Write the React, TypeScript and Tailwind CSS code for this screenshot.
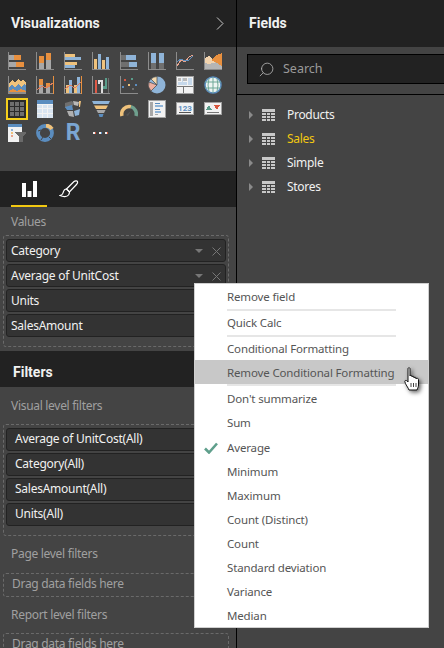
import React from 'react';
import { Search } from 'lucide-react';

const G = '#a8a8a8';
const D = '#6f6f6f';
const O = '#e8903f';
const B = '#8fb4d8';
const T = '#efc27c';
const A = '#8c8c8c';
const W = '#f2f2f2';
const N = '#5b8dbf';

type Box = [number, number, number, number, string];

// a small chart icon out of plain bars
function Bars({ boxes, children }: { boxes: Box[]; children?: React.ReactNode }) {
  return (
    <svg width="18" height="18" viewBox="0 0 18 18" shapeRendering="crispEdges">
      {boxes.map(([x, y, w, h, c], i) => (
        <rect key={i} x={x} y={y} width={w} height={h} fill={c} />
      ))}
      {children}
    </svg>
  );
}

const axisL: Box[] = [[0, 0, 1, 18, A], [0, 17, 18, 1, A]];
const frame = (bg: string): Box[] => [[0, 0, 18, 18, '#a0a0a0'], [1, 1, 16, 16, bg]];

const icons: React.ReactNode[] = [
  <Bars boxes={[...axisL, [1, 3, 5, 5, G], [6, 3, 7, 5, O], [1, 10, 7, 5, G], [8, 10, 8, 5, O]]} />,
  <Bars boxes={[...axisL, [3, 11, 5, 6, G], [3, 4, 5, 7, O], [10, 8, 5, 9, G], [10, 1, 5, 7, O]]} />,
  <Bars boxes={[...axisL, [1, 2, 10, 3, T], [1, 5, 16, 3, B], [1, 10, 12, 3, T], [1, 13, 10, 3, B]]} />,
  <Bars boxes={[...axisL, [2, 7, 3, 10, T], [6, 2, 3, 15, B], [10, 8, 3, 9, T], [14, 5, 3, 12, B]]} />,
  <Bars boxes={[...axisL, [1, 3, 5, 5, D], [6, 3, 10, 5, B], [1, 10, 8, 5, D], [9, 10, 8, 5, B]]} />,
  <Bars boxes={[...axisL, [3, 11, 5, 6, D], [3, 1, 5, 10, B], [11, 11, 5, 6, D], [11, 1, 5, 10, B]]} />,
  <Bars boxes={axisL}>
    <path d="M1 14L5 8L9 10L13 5L17 3" fill="none" stroke="#e8a58f" strokeWidth="1" />
    <path d="M1 10L5 7L9 9L13 8L17 4" fill="none" stroke="#5f8fbf" strokeWidth="1" />
  </Bars>,
  <Bars boxes={[[0, 0, 1, 18, A], [0, 17, 18, 1, A]]}>
    <path d="M1 17V11L5 12L11 10L18 14V17Z" fill="#b5b5b5" />
    <path d="M1 11V6L5 4L9 8L13 10L5 12Z" fill="#f2d3ae" />
    <path d="M7 8L12 3L18 1V14L11 10Z" fill={O} />
  </Bars>,
  <Bars boxes={[[0, 16, 18, 2, A], [0, 0, 1, 18, A]]}>
    <path d="M1 16V8L4 4L7 7L10 3L13 6L15 3L18 7V16Z" fill={T} />
    <path d="M1 11L4 9L7 12L10 8L13 11L16 8L18 10V15H1Z" fill={N} />
    <path d="M1 15L5 13L9 15L13 13L18 15V16H1Z" fill={O} />
  </Bars>,
  <Bars boxes={[...axisL, [3, 9, 4, 8, G], [10, 11, 4, 6, G], [3, 3, 4, 6, O], [10, 7, 4, 4, O], [17, 0, 1, 18, O]]}>
    <path d="M1 14L6 10L10 12L17 7" fill="none" stroke="#e07f5f" strokeWidth="1" />
  </Bars>,
  <Bars boxes={[...axisL, [2, 9, 3, 8, T], [5, 4, 3, 13, B], [10, 9, 3, 8, T], [13, 1, 3, 16, B], [17, 0, 1, 18, O]]}>
    <path d="M1 13L6 9L11 12L17 6" fill="none" stroke="#e07f5f" strokeWidth="1" />
  </Bars>,
  <Bars boxes={[...axisL, [3, 4, 2, 13, '#e05a47'], [6, 4, 2, 4, '#dddddd'], [6, 4, 4, 2, '#dddddd'], [9, 4, 2, 13, '#dddddd'], [11, 10, 3, 3, '#5a9c8a'], [13, 2, 2, 11, '#5a9c8a'], [16, 2, 1, 15, D]]} />,
  <Bars boxes={axisL}>
    <circle cx="5" cy="4" r="1.5" fill="#d9583f" />
    <circle cx="12" cy="3" r="1.5" fill="#5a9c8a" />
    <circle cx="9" cy="9" r="1.5" fill={T} />
    <circle cx="3" cy="11" r="1.5" fill={N} />
    <circle cx="16" cy="9" r="1.5" fill={N} />
    <circle cx="13" cy="13" r="1.5" fill={D} />
  </Bars>,
  <svg width="18" height="18" viewBox="0 0 18 18">
    <circle cx="9" cy="9" r="8.5" fill={B} />
    <path d="M9 9L9 .5A8.5 8.5 0 0 0 3 3Z" fill="#f2d9b0" stroke="#444" strokeWidth=".7" />
    <path d="M9 9L1 6A8.5 8.5 0 0 0 3 15Z" fill="#eeb0a0" stroke="#444" strokeWidth=".7" />
  </svg>,
  <Bars boxes={[...frame(W), [2, 2, 3, 3, '#b9b9b9'], [6, 2, 5, 3, '#b9b9b9'], [2, 6, 9, 3, '#c6d8ea'], [12, 2, 4, 7, '#c6d8ea'], [6, 2, 1, 7, '#c6d8ea'], [1, 10, 16, 1, '#777777'], [7, 11, 1, 6, '#777777']]} />,
  <svg width="18" height="18" viewBox="0 0 18 18">
    <circle cx="9" cy="9" r="8" fill="#eef5f2" stroke={N} strokeWidth="1.5" />
    <path d="M1 6H17M1 12H17M9 1V17M5 2.5Q3 9 5 15.5M13 2.5Q15 9 13 15.5" fill="none" stroke="#6fa898" strokeWidth="1" />
  </svg>,
  <Bars boxes={[[0, 0, 18, 18, '#2a2a2a'], [2, 2, 4, 4, D], [7, 2, 4, 4, D], [12, 2, 4, 4, D], [2, 7, 4, 4, D], [7, 7, 4, 4, D], [12, 7, 4, 4, D], [2, 12, 4, 4, D], [7, 12, 4, 4, D], [12, 12, 4, 4, D]]} />,
  <Bars boxes={[[1, 0, 16, 18, '#d8e4f0'], [1, 0, 16, 4, N], [6, 4, 1, 14, W], [11, 4, 1, 14, W], [1, 8, 16, 1, W], [1, 13, 16, 1, W], [1, 4, 16, 1, W]]} />,
  <svg width="18" height="18" viewBox="0 0 18 18">
    <path d="M1 3L8 1L10 4L7 8H1Z" fill={D} />
    <path d="M9 1L15 2L14 6L10 5Z" fill="#b8b8b8" />
    <path d="M1 7L8 5L9 10H3Z" fill={N} />
    <path d="M3 11L9 11L10 17L5 16Z" fill="#b0b0b0" />
    <path d="M10 11L16 9L15 15L11 16Z" fill={B} />
    <path d="M15 1H17L16 7H15Z" fill={T} />
  </svg>,
  <svg width="18" height="18" viewBox="0 0 18 18">
    <path d="M0 1H18L16.5 4H1.5Z" fill={B} />
    <path d="M2 5.5H16L14 9H4Z" fill={T} />
    <path d="M4.5 10H13.5L12 13H6Z" fill={G} />
    <path d="M6.5 14H11.5L10.5 17H7.5Z" fill={N} />
  </svg>,
  <svg width="18" height="18" viewBox="0 0 18 18">
    <path d="M2 16A7.5 7.5 0 0 1 11 6.7" fill="none" stroke={T} strokeWidth="3.5" />
    <path d="M11 6.7A7.5 7.5 0 0 1 16 16" fill="none" stroke="#6fa08e" strokeWidth="3.5" />
    <path d="M6 15L11 11L8 16Z" fill="#555" />
  </svg>,
  <Bars boxes={[[0, 0, 18, 18, '#a0a0a0'], [1, 1, 16, 16, W], [2, 2, 3, 14, G], [7, 3, 5, 1, N], [7, 5, 8, 2, B], [7, 9, 5, 1, N], [7, 11, 6, 2, B], [7, 14, 3, 1, G]]} />,
  <Bars boxes={[[0, 2, 18, 13, '#a0a0a0'], [1, 3, 16, 11, W], [3, 12, 12, 1, '#555555']]}>
    <text x="9" y="10.5" textAnchor="middle" fontSize="8" fontWeight="700" fill={N} fontFamily="Roboto, sans-serif">123</text>
  </Bars>,
  <Bars boxes={[[0, 2, 18, 13, '#a0a0a0'], [1, 3, 16, 11, W], [3, 12, 12, 1, '#777777']]}>
    <path d="M2 10L5 5L8 10Z" fill="#5a9c8a" />
    <path d="M10 5H16L13 10Z" fill="#d9583f" />
  </Bars>,
  <Bars boxes={[[0, 0, 14, 18, W], [0, 0, 14, 3, N], [3, 5, 2, 2, B], [3, 8, 2, 2, T], [3, 11, 2, 2, '#e8a58f']]}>
    <path d="M6 8H19L14.5 13V18H11V13Z" fill="#6a6a6a" />
  </Bars>,
  <svg width="18" height="18" viewBox="0 0 18 18">
    <circle cx="9" cy="9" r="7" fill="none" stroke={N} strokeWidth="3.8" />
    <path d="M10 1.5A7.5 7.5 0 0 1 16 5" fill="none" stroke={T} strokeWidth="3.8" />
    <path d="M2 7L5 6M13 13L15 15M7 13L5 16" stroke="#444" strokeWidth="1" />
  </svg>,
  <span className="block w-[18px] h-[18px] leading-[18px] text-center text-[23px] font-bold text-[#7ba6d1] [font-family:'Roboto',sans-serif]">R</span>,
  <Bars boxes={[[1, 8, 2, 2, W], [3, 8, 1, 2, '#d9583f'], [7, 8, 2, 2, W], [9, 8, 1, 2, N], [13, 8, 2, 2, W], [15, 8, 1, 2, '#d9583f']]} />,
];

function Pill({ label, tools, pad = 'pl-[4px] pt-[1px]' }: { label: string; tools?: boolean; pad?: string }) {
  return (
    <div className={`h-[23px] ${pad} pr-[4px] flex items-center justify-between rounded-[3px] bg-[#333333] border border-[#222222] text-[12px] tracking-[-0.25px] text-[#f1f1f1]`}>
      <span>{label}</span>
      {tools && (
        <span className="flex items-center gap-[9px]">
          <span className="w-0 h-0 border-x-[4px] border-x-transparent border-t-[4px] border-t-[#777777]" />
          <svg width="9" height="9" viewBox="0 0 9 9">
            <path d="M.5 .5L8.5 8.5M8.5 .5L.5 8.5" stroke="#777777" strokeWidth="1" />
          </svg>
        </span>
      )}
    </div>
  );
}

function HandCursor() {
  return (
    <svg width="18" height="25" viewBox="0 0 18 25" className="absolute left-[209px] top-[83px] drop-shadow-[2px_2px_2px_rgba(0,0,0,0.6)]">
      <path
        d="M4 1.5C4 .5 6 .5 6 1.5V9C6 8 8 8 8 9V10C8 9 10 9 10 10V11C10 10 12 10 12 11V12C12 11 14.5 11 14.5 12.5V18C14.5 20 13.5 21 13 23H5C4.5 21 1 17 .8 14.5C.7 13 2.8 13 4 15Z"
        fill="#ffffff"
        stroke="#111111"
        strokeWidth="1"
      />
      <path d="M7 16V20M9.5 16V20M12 16V20" stroke="#111111" strokeWidth=".8" />
    </svg>
  );
}

const menuTop = ['Remove field', 'Quick Calc', 'Conditional Formatting'];
const menuBottom = ["Don't summarize", 'Sum', 'Average', 'Minimum', 'Maximum', 'Count (Distinct)', 'Count', 'Standard deviation', 'Variance', 'Median'];

function MenuRow({ label }: { label: string }) {
  return (
    <div className={`relative h-[24px] pl-[32px] flex items-center ${label === 'Average' ? 'mt-[1px]' : ''}`}>
      {label === 'Average' && (
        <svg width="14" height="12" viewBox="0 0 14 12" className="absolute left-[9px] top-[6px]">
          <path d="M1 6.5L5 10.5L13 1.5" fill="none" stroke="#5f9f8c" strokeWidth="2.6" />
        </svg>
      )}
      {label}
    </div>
  );
}

function ContextMenu() {
  return (
    <div className="absolute left-[194px] top-[283px] w-[235px] h-[345px] bg-white border border-[#d0d0d0] pt-[1px] text-[11.5px] tracking-[-0.15px] text-[#555555] [font-family:'Noto_Sans',sans-serif]">
      {menuTop.map((label, i) => (
        <React.Fragment key={label}>
          <MenuRow label={label} />
          {i < 2 && <div className="h-[2px] ml-[32px] w-[169px] bg-[#e6e6e6]" />}
        </React.Fragment>
      ))}
      <div className="h-[24px] -mt-[1px] pl-[32px] pt-[2px] flex items-center bg-[#c8c8c8]">Remove Conditional Formatting</div>
      <div className="h-[2px] ml-[32px] w-[169px] bg-[#e6e6e6] mb-[1px]" />
      {menuBottom.map(label => (
        <MenuRow key={label} label={label} />
      ))}
      <HandCursor />
    </div>
  );
}

export default function App() {
  return (
    <div className="relative w-[444px] h-[648px] overflow-hidden flex bg-[#444444] text-[#f1f1f1] [font-family:'Noto_Sans',sans-serif]">
      {/* left: visualizations + filters */}
      <div className="w-[237px] shrink-0 border-r border-black flex flex-col">
        <div className="h-[47px] shrink-0 bg-[#222222] pl-[11px] pr-[12px] flex items-center justify-between">
          <span className="text-[14px] font-bold [font-family:'Roboto',sans-serif]">Visualizations</span>
          <svg width="8" height="13" viewBox="0 0 8 13" fill="none" stroke="#c8c8c8" strokeWidth="1">
            <path d="M1 .5L7 6.5L1 12.5" />
          </svg>
        </div>

        <div className="h-[124px] shrink-0 px-[8px] pt-[5px] grid grid-cols-[repeat(8,18px)] gap-x-[10px] gap-y-[6px] content-start">
          {icons.map((icon, i) => (
            <div key={i} className={i === 16 ? 'w-[18px] h-[18px] outline-2 outline-[#f5cf1c]' : 'w-[18px] h-[18px]'}>
              {icon}
            </div>
          ))}
        </div>

        <div className="h-[36px] shrink-0 bg-[#222222] flex items-stretch">
          <div className="ml-[11px] w-[36px] border-b-2 border-[#f2c811] flex items-start justify-center pt-[10px]">
            <svg width="15" height="16" viewBox="0 0 15 16">
              <path d="M0 2H4V16H0ZM5.5 10H9.5V16H5.5ZM11 0H15V16H11Z" fill="#ffffff" />
            </svg>
          </div>
          <div className="ml-[12px] pt-[9px]">
            <svg width="20" height="20" viewBox="0 0 20 20" fill="none" stroke="#ffffff" strokeWidth="1.2">
              <path d="M7.5 9L15 1.5C16 .7 18 .5 18.5 1.5C19 2.5 18.5 3.5 17.5 4.5L10.5 12Z" />
              <path d="M7.5 9C5 9 4.5 11 4 13C3.7 14.5 2.5 15 1 15.5C4 17 8 17 9.5 15C10.5 13.5 10.5 12.5 10.5 12Z" />
            </svg>
          </div>
        </div>

        <div className="h-[144px] shrink-0 pl-[3px] pr-[7px] pt-[5px]">
          <div className="text-[12px] tracking-[-0.3px] leading-[20px] pl-[8px] text-[#a0a0a0]">Values</div>
          <div className="mt-[3px] h-[112px] px-[2px] pt-[3px] flex flex-col gap-[2px] rounded-[3px] border border-dashed border-[#6a6a6a]">
            <Pill label="Category" tools />
            <Pill label="Average of UnitCost" tools />
            <Pill label="Units" />
            <Pill label="SalesAmount" />
          </div>
        </div>

        <div className="h-[36px] shrink-0 bg-[#222222] pl-[13px] pt-[6px] flex items-center text-[14px] font-bold [font-family:'Roboto',sans-serif]">Filters</div>

        <div className="flex-1 pl-[3px] pr-[7px] pt-[9px] text-[12px] tracking-[-0.3px] text-[#a0a0a0]">
          <div className="leading-[20px] pl-[8px]">Visual level filters</div>
          <div className="mt-[8px] h-[112px] px-[2px] pt-[3px] flex flex-col gap-[2px] rounded-[3px] border border-dashed border-[#6a6a6a]">
            <Pill label="Average of UnitCost(All)" pad="pl-[8px] pb-[2px]" />
            <Pill label="Category(All)" pad="pl-[8px] pb-[2px]" />
            <Pill label="SalesAmount(All)" pad="pl-[8px] pb-[2px]" />
            <Pill label="Units(All)" pad="pl-[8px] pb-[2px]" />
          </div>
          <div className="mt-[8px] leading-[20px] pl-[8px]">Page level filters</div>
          <div className="mt-[9px] h-[24px] pl-[8px] pb-[2px] flex items-center rounded-[3px] border border-dashed border-[#6a6a6a]">Drag data fields here</div>
          <div className="mt-[8px] leading-[20px] pl-[8px]">Report level filters</div>
          <div className="mt-[8px] h-[24px] pl-[8px] pb-[2px] flex items-center rounded-[3px] border border-dashed border-[#6a6a6a]">Drag data fields here</div>
        </div>
      </div>

      {/* right: fields */}
      <div className="flex-1 flex flex-col min-w-0">
        <div className="h-[47px] shrink-0 bg-[#222222] pl-[12px] flex items-center text-[14px] font-bold [font-family:'Roboto',sans-serif]">Fields</div>
        <div className="h-[48px] shrink-0 border-b border-black pl-[10px] pt-[7px]">
          <div className="h-[30px] w-[220px] bg-[#222222] border border-black pl-[10px] flex items-center gap-[8px] text-[12.5px] text-[#9a9a9a]">
            <Search size={17} strokeWidth={1.2} className="-scale-x-100 text-[#b0b0b0]" />
            <span>Search</span>
          </div>
        </div>
        <div className="pt-[8px] pl-[12px] text-[12px] tracking-[-0.3px] flex flex-col">
          {['Products', 'Sales', 'Simple', 'Stores'].map(name => (
            <div key={name} className={`h-[24px] flex items-center ${name === 'Sales' ? 'text-[#f2c811]' : 'text-[#f1f1f1]'}`}>
              <span className="w-0 h-0 border-y-[4px] border-y-transparent border-l-[4px] border-l-[#8a8a8a]" />
              <svg width="13" height="12" viewBox="0 0 13 12" className="ml-[9px] mr-[12px]" shapeRendering="crispEdges">
                <rect width="13" height="12" fill="#c8c8c8" />
                <path d="M0 3.5H13M0 6.5H13M0 9.5H13M4 3V12M8.5 3V12" stroke="#444444" strokeWidth="1" />
              </svg>
              <span>{name}</span>
            </div>
          ))}
        </div>
      </div>

      <ContextMenu />
    </div>
  );
}
